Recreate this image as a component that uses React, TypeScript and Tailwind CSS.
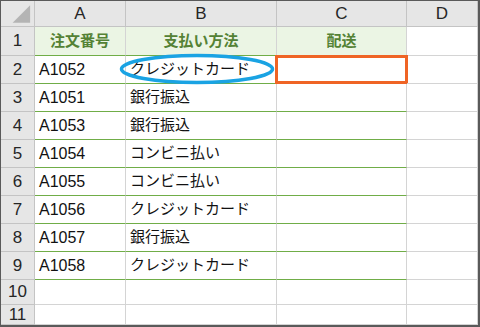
import React from 'react'

type Row = {
  no: number
  order?: string
  payment?: string
}

const rows: Row[] = [
  { no: 2, order: 'A1052', payment: 'クレジットカード' },
  { no: 3, order: 'A1051', payment: '銀行振込' },
  { no: 4, order: 'A1053', payment: '銀行振込' },
  { no: 5, order: 'A1054', payment: 'コンビニ払い' },
  { no: 6, order: 'A1055', payment: 'コンビニ払い' },
  { no: 7, order: 'A1056', payment: 'クレジットカード' },
  { no: 8, order: 'A1057', payment: '銀行振込' },
  { no: 9, order: 'A1058', payment: 'クレジットカード' },
]

const font = "font-['Liberation_Sans','Noto_Sans_CJK_JP',sans-serif]"

// gray header cell (column letters / row numbers)
const hdr = 'flex items-center justify-center bg-[#e6e6e6] border-r border-b border-[#c4c4c4] text-[17px] text-[#262626]'
const cell = 'relative flex items-center pl-[4px] border-r border-b border-[#d4d4d4] text-[15px] text-[#111] whitespace-nowrap'
const greenCell = 'relative flex items-center pl-[4px] border-r border-b border-r-[#d4d4d4] border-b-[#70ad47] text-[15px] text-[#111] whitespace-nowrap'

export default function App() {
  return (
    <div className={`${font} w-[480px] h-[327px] bg-white overflow-hidden border-t border-l border-r-2 border-b-2 border-[#5a5a5a]`}>
      <div className="grid grid-cols-[34px_91px_151px_130px_71px] grid-rows-[26px_29px_repeat(8,28px)_25px_20px]">
        {/* corner */}
        <div className={hdr}>
          <svg width="34" height="26" viewBox="0 0 34 26">
            <polygon points="30,4 30,22 12,22" fill="#b4b4b4" />
          </svg>
        </div>
        {['A', 'B', 'C', 'D'].map((c) => (
          <div key={c} className={hdr}>{c}</div>
        ))}

        {/* table headers */}
        <div className={hdr}>1</div>
        {['注文番号', '支払い方法', '配送'].map((t) => (
          <div
            key={t}
            className="flex items-center justify-center bg-[#ebf5e4] border-r border-b border-r-[#d4d4d4] border-b-[#70ad47] text-[15px] font-bold text-[#548235]"
          >
            {t}
          </div>
        ))}
        <div className={cell} />

        {rows.map((r) => (
          <React.Fragment key={r.no}>
            <div className={hdr}>{r.no}</div>
            <div className={`${greenCell} text-[16px]`}>{r.order}</div>
            <div className={greenCell}>
              {r.payment}
              {r.no === 2 && (
                <svg
                  className="absolute left-[-6px] top-[-2px] overflow-visible pointer-events-none"
                  width="156"
                  height="30"
                  viewBox="0 0 156 30"
                >
                  <ellipse cx="77" cy="15" rx="75.5" ry="13.5" fill="none" stroke="#1aa3e3" strokeWidth="3.5" />
                </svg>
              )}
            </div>
            <div className={greenCell}>
              {r.no === 2 && (
                <div className="absolute left-[-2px] top-[-1px] w-[133px] h-[29px] border-[3px] border-[#ef6425]" />
              )}
            </div>
            <div className={cell} />
          </React.Fragment>
        ))}

        {[10, 11].map((n) => (
          <React.Fragment key={n}>
            <div className={hdr}>{n}</div>
            <div className={cell} />
            <div className={cell} />
            <div className={cell} />
            <div className={cell} />
          </React.Fragment>
        ))}
      </div>
    </div>
  )
}
